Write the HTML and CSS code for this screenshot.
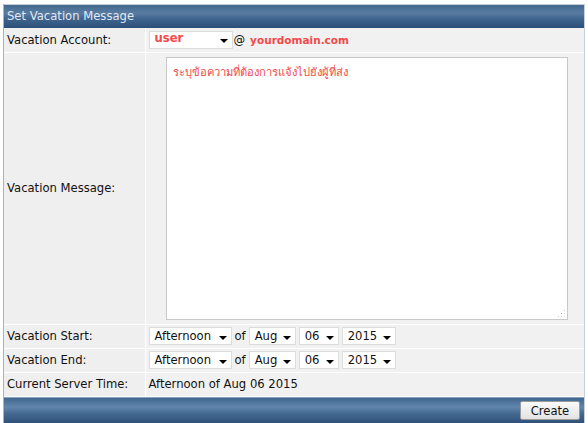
FILE: index.html
```html
<!DOCTYPE html>
<html lang="en">
<head>
  <meta charset="UTF-8">
  <title>Set Vacation Message</title>
  <link rel="stylesheet" href="styles.css">
</head>
<body>
  <div class="panel">
    <div class="panel-head">Set Vacation Message</div>
    <table class="form">
      <tr>
        <td class="label">Vacation Account:</td>
        <td class="value">
          <div class="controls">
            <span class="sel sel-user"><span class="red">user</span><i class="arrow"></i></span>
            <span class="at">@</span>
            <span class="domain">yourdomain.com</span>
          </div>
        </td>
      </tr>
      <tr class="msg-row">
        <td class="label">Vacation Message:</td>
        <td class="value">
          <div class="textarea">
            <span class="thai">ระบุข้อความที่ต้องการแจ้งไปยังผู้ที่ส่ง</span>
            <span class="grip"></span>
          </div>
        </td>
      </tr>
      <tr>
        <td class="label">Vacation Start:</td>
        <td class="value">
          <div class="controls">
            <span class="sel sel-time">Afternoon<i class="arrow"></i></span>
            <span class="of">of</span>
            <span class="sel sel-mon">Aug<i class="arrow"></i></span>
            <span class="sel sel-day">06<i class="arrow"></i></span>
            <span class="sel sel-year">2015<i class="arrow"></i></span>
          </div>
        </td>
      </tr>
      <tr>
        <td class="label">Vacation End:</td>
        <td class="value">
          <div class="controls">
            <span class="sel sel-time">Afternoon<i class="arrow"></i></span>
            <span class="of">of</span>
            <span class="sel sel-mon">Aug<i class="arrow"></i></span>
            <span class="sel sel-day">06<i class="arrow"></i></span>
            <span class="sel sel-year">2015<i class="arrow"></i></span>
          </div>
        </td>
      </tr>
      <tr>
        <td class="label">Current Server Time:</td>
        <td class="value">Afternoon of Aug 06 2015</td>
      </tr>
    </table>
    <div class="panel-foot">
      <button class="btn">Create</button>
    </div>
  </div>
</body>
</html>
```

FILE: styles.css
```css
* {
  margin: 0;
  padding: 0;
  box-sizing: border-box;
}

body {
  font-family: 'DejaVu Sans', Verdana, sans-serif;
  font-size: 11.6px;
  color: #111;
  background: #fff;
  padding: 4px 3px 0 3px;
}

.panel {
  border-left: 1px solid #a9b4c0;
  border-right: 1px solid #c9d0d8;
  background: #f0f0f0;
}

.panel-head {
  height: 24px;
  line-height: 22px;
  padding-left: 3px;
  color: #e2e9f2;
  background: linear-gradient(#42698f, #5a7ca1 35%, #3f6590 60%, #2c4f78);
  border-top: 1px solid #c5ccd4;
}

.form {
  width: 100%;
  border-collapse: collapse;
}

.form td {
  border-bottom: 1px solid #fff;
  height: 24px;
  vertical-align: middle;
}

.form .label {
  width: 141px;
  padding-left: 3px;
  background: #efefef;
  border-right: 1px solid #fff;
}

.form .value {
  padding-left: 3px;
  background: #f1f1f1;
  white-space: nowrap;
}

.controls {
  display: flex;
  align-items: center;
  gap: 3px;
}

.sel {
  display: inline-flex;
  align-items: center;
  justify-content: space-between;
  height: 18px;
  padding: 0 4px 0 5px;
  background: #fff;
  border: 1px solid #dcdcdc;
}

.arrow {
  width: 0;
  height: 0;
  border-left: 4px solid transparent;
  border-right: 4px solid transparent;
  border-top: 4px solid #000;
  margin-top: 3px;
}

.sel-user { width: 84px; }
.sel-time { width: 83px; }
.sel-mon { width: 47px; }
.sel-day { width: 40px; }
.sel-year { width: 54px; }

.red {
  color: #f24a4a;
  font-weight: bold;
  margin-top: -3px;
}

.at {
  margin-left: -2px;
}

.domain {
  color: #f24a4a;
  font-weight: bold;
  font-size: 10.5px;
  margin-left: 2px;
}

.of {
  margin: 0;
}

.msg-row td {
  height: 272px;
}

.textarea {
  position: relative;
  width: 402px;
  height: 263px;
  margin-left: 17px;
  background: #fff;
  border: 1px solid #c8c8c8;
  padding: 5px 6px;
}

.thai {
  color: #f24a4a;
  font-family: 'Noto Sans', 'DejaVu Sans', sans-serif;
  font-size: 11.2px;
}

.grip {
  position: absolute;
  right: 2px;
  bottom: 2px;
  width: 8px;
  height: 8px;
  background:
    radial-gradient(circle, #999 0.8px, transparent 1px) 0 0 / 3px 3px;
  clip-path: polygon(100% 0, 100% 100%, 0 100%);
}

.panel-foot {
  height: 27px;
  display: flex;
  justify-content: flex-end;
  align-items: center;
  padding-right: 4px;
  background: linear-gradient(#3f6790, #6286ad 35%, #44698f 60%, #2c4f78);
  border-top: 1px solid #8aa3bf;
}

.btn {
  font-family: 'DejaVu Sans', Verdana, sans-serif;
  font-size: 11.6px;
  width: 60px;
  height: 19px;
  color: #111;
  background: linear-gradient(#fafafa, #e2e2e2);
  border: 1px solid #9a9a9a;
  border-radius: 2px;
}
```
